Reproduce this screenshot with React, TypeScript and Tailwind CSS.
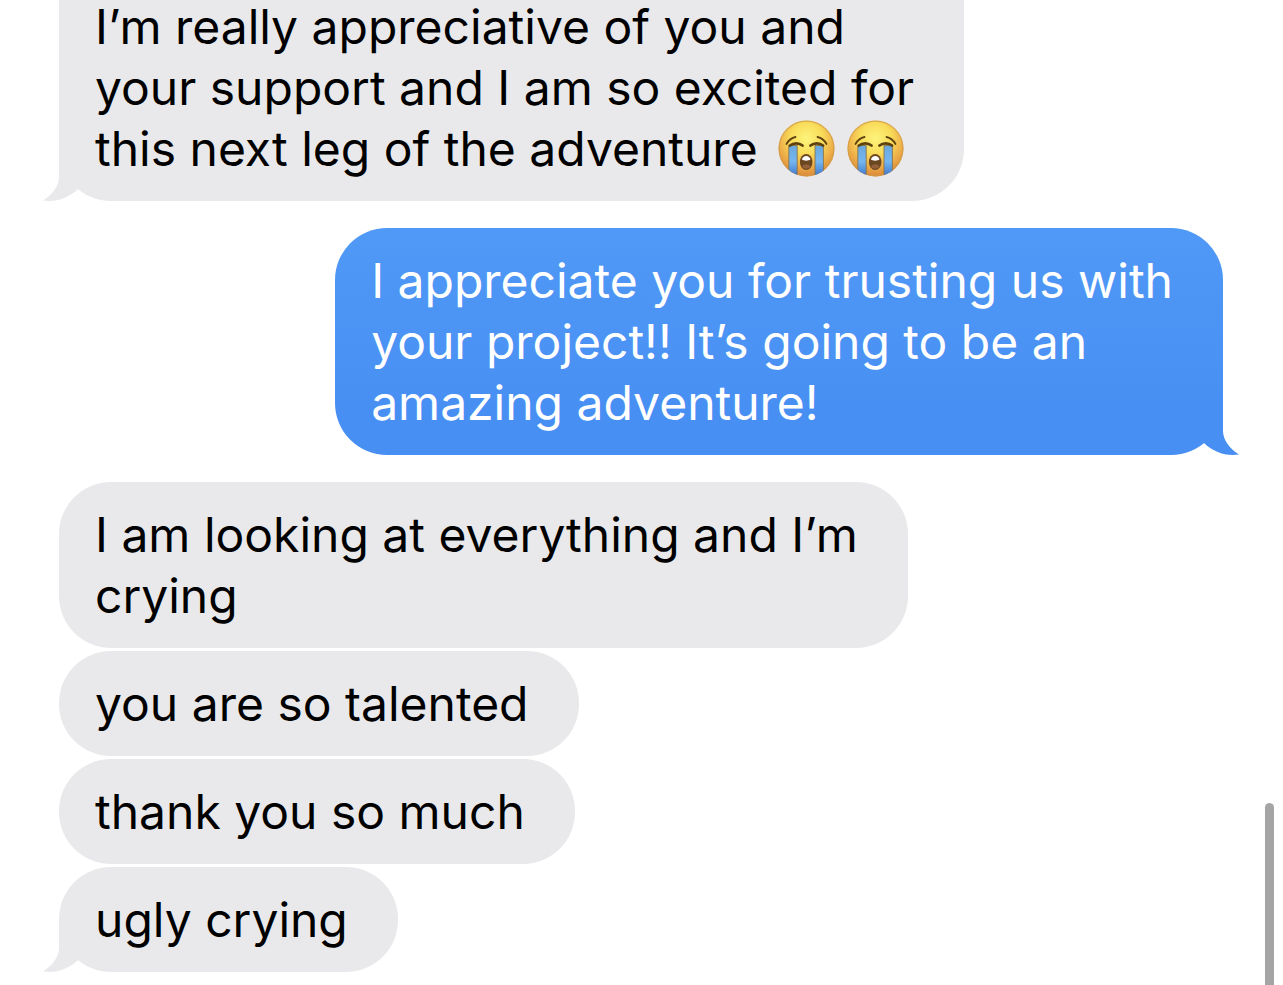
import React from 'react';
import clsx from 'clsx';

type Message = {
  id: number;
  from: 'me' | 'them';
  lines: string[];
  sobs?: number;
  groupEnd?: boolean;
  continued?: boolean;
};

const messages: Message[] = [
  {
    id: 1,
    from: 'them',
    lines: ['I’m really appreciative of you and', 'your support and I am so excited for', 'this next leg of the adventure'],
    sobs: 2,
    groupEnd: true,
    continued: true,
  },
  {
    id: 2,
    from: 'me',
    lines: ['I appreciate you for trusting us with', 'your project!! It’s going to be an', 'amazing adventure!'],
    groupEnd: true,
  },
  { id: 3, from: 'them', lines: ['I am looking at everything and I’m', 'crying'] },
  { id: 4, from: 'them', lines: ['you are so talented'] },
  { id: 5, from: 'them', lines: ['thank you so much'] },
  { id: 6, from: 'them', lines: ['ugly crying'], groupEnd: true },
];

function SobEmoji() {
  return (
    <svg viewBox="0 0 57 57" className="size-[57px]" role="img" aria-label="Loudly crying face">
      <defs>
        <radialGradient id="face" cx="0.5" cy="0.32" r="0.7">
          <stop offset="0" stopColor="#fdf47c" />
          <stop offset="0.4" stopColor="#f9dc5a" />
          <stop offset="0.72" stopColor="#ecad48" />
          <stop offset="1" stopColor="#d98335" />
        </radialGradient>
        <linearGradient id="tear" x1="0" y1="0" x2="0" y2="1">
          <stop offset="0" stopColor="#6aa8dc" />
          <stop offset="0.5" stopColor="#74b6f0" />
          <stop offset="1" stopColor="#3a70c8" />
        </linearGradient>
        <clipPath id="head">
          <circle cx="28.5" cy="28.5" r="28" />
        </clipPath>
      </defs>
      <circle cx="28.5" cy="28.5" r="28" fill="url(#face)" />
      <circle cx="28.5" cy="28.5" r="27.4" fill="none" stroke="#cf9a48" strokeOpacity="0.7" strokeWidth="1.2" />
      <g clipPath="url(#head)" fill="url(#tear)" stroke="#8a7448" strokeWidth="0.9">
        <path d="M10.8 25.5h8.4v32h-8.4z" />
        <path d="M37 25.5h8.4v32H37z" />
      </g>
      <g fill="none" stroke="#5f430f" strokeLinecap="round">
        <path d="M8.5 24C10.5 20.5 13.5 17.8 17.5 17" strokeWidth="1.8" />
        <path d="M48.5 24C46.5 20.5 43.5 17.8 39.5 17" strokeWidth="1.8" />
        <path d="M12 25.5C15.5 22.6 21 22.6 24.5 25.5" strokeWidth="2.8" />
        <path d="M45 25.5C41.5 22.6 36 22.6 32.5 25.5" strokeWidth="2.8" />
      </g>
      <ellipse cx="28.2" cy="42" rx="6.3" ry="8" fill="#6b4720" />
      <path d="M24 39.5C24.6 34.8 31.8 34.8 32.4 39.5C31 41 25.4 41 24 39.5z" fill="#fff" />
      <path d="M24 46.5C26 43.5 30.5 43.5 32.5 46.5C31 49.5 25.500 49.500 24 46.500z" fill="#93603a" />
    </svg>
  );
}

function Tail({ mine }: { mine: boolean }) {
  return (
    <svg
      viewBox="0 0 52 52"
      className={clsx(
        'absolute bottom-0 size-[52px]',
        mine ? '-right-4 -scale-x-100 text-[#488ff3]' : '-left-4 text-[#e9e9eb]'
      )}
      aria-hidden="true"
    >
      <path d="M16 0V28C16 37 9 46 0 51.5C13 53.5 26 49 35 40L44 24V0Z" fill="currentColor" />
    </svg>
  );
}

function Bubble({ message }: { message: Message }) {
  const mine = message.from === 'me';

  return (
    <li
      className={clsx(
        'relative w-fit rounded-b-[52px] py-[22px] pl-9 pr-[50px]',
        mine ? 'self-end bg-linear-to-b from-[#5099f6] to-[#488ff3] to-80% text-white' : 'bg-[#e9e9eb] text-black',
        !message.continued && 'rounded-t-[52px]',
        message.groupEnd ? 'mb-[27px] last:mb-0' : 'mb-[3px]'
      )}
    >
      {message.groupEnd && <Tail mine={mine} />}
      <div className="relative">
        {message.lines.map((line, i) => (
          <p key={line} className="flex items-center whitespace-nowrap">
            {line}
            {message.sobs && i === message.lines.length - 1 && (
              <span className="ml-5 flex gap-3">
                {Array.from({ length: message.sobs }, (_, n) => (
                  <SobEmoji key={n} />
                ))}
              </span>
            )}
          </p>
        ))}
      </div>
    </li>
  );
}

export default function App() {
  return (
    <main className="relative flex h-screen flex-col justify-end overflow-hidden bg-white pb-[13px] pl-[59px] pr-[60px] font-['Inter','Liberation_Sans',sans-serif] text-[48px] leading-[61px]">
      <ul className="flex flex-col">
        {messages.map((message) => (
          <Bubble key={message.id} message={message} />
        ))}
      </ul>
      <div className="absolute bottom-0 right-[9px] h-[182px] w-[9px] rounded-t-full bg-[#a5a5a5]" />
    </main>
  );
}
